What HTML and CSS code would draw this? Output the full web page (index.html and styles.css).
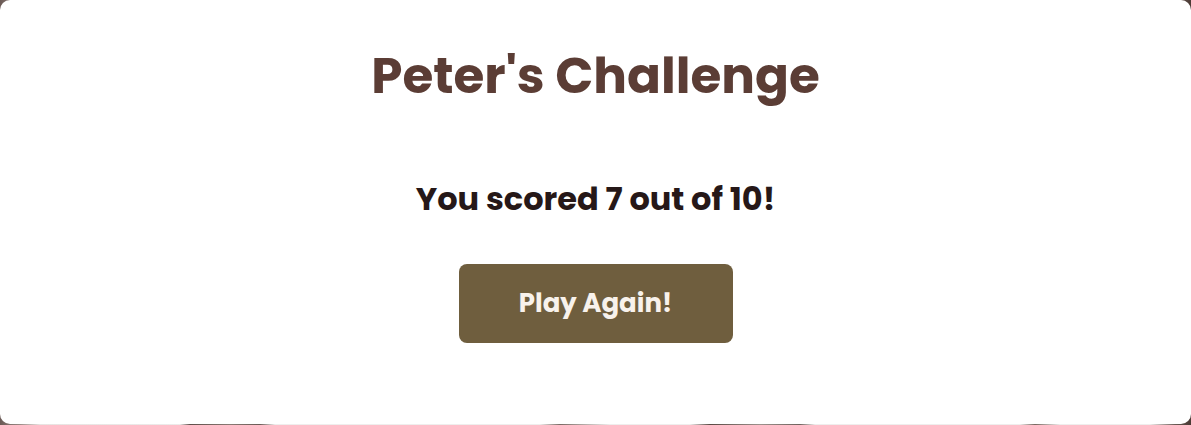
FILE: index.html
```html
<!DOCTYPE html>
<html lang="en">
<head>
<meta charset="utf-8">
<title>Peter's Challenge</title>
<link rel="stylesheet" href="styles.css">
</head>
<body>
<main class="card">
  <h1 class="title">Peter's Challenge</h1>
  <p class="score">You scored 7 out of 10!</p>
  <button class="btn" type="button">Play Again!</button>
</main>
</body>
</html>
```

FILE: styles.css
```css
html, body {
  margin: 0;
  padding: 0;
}
body {
  width: 1191px;
  height: 425px;
  overflow: hidden;
  font-family: "Poppins", "Open Sans", "Noto Sans", sans-serif;
  background:
    linear-gradient(90deg,
      #6b5a55 0px, #9a8a85 20px, #e8e4e2 40px, #ecebea 180px,
      #5f4f4a 190px, #8a7a74 230px, #6a5a55 260px, #efeeed 275px,
      #efeeed 540px, #7a6a64 560px, #efeeed 610px,
      #efeeed 690px, #5a4a44 710px, #9d928d 760px, #6f625d 800px, #efeeed 815px,
      #efeeed 1020px, #77675f 1035px, #efeeed 1060px, #efeeed 1150px,
      #6b5b55 1175px, #4a3a34 1191px);
}
.card {
  box-sizing: border-box;
  width: 1191px;
  height: 424px;
  background: #ffffff;
  border-radius: 10px;
  display: flex;
  flex-direction: column;
  align-items: center;
  padding-top: 46px;
}
.title {
  margin: 0;
  font-size: 50px;
  line-height: 60px;
  font-weight: 700;
  color: #5b3d35;
}
.score {
  margin: 73px 0 0;
  font-size: 32px;
  line-height: 40px;
  font-weight: 700;
  color: #261818;
}
.btn {
  margin-top: 45px;
  width: 274px;
  height: 79px;
  border: none;
  border-radius: 8px;
  background: #6f5e3e;
  color: #f8f2ec;
  font-family: inherit;
  font-size: 26px;
  font-weight: 700;
  cursor: pointer;
}
```
